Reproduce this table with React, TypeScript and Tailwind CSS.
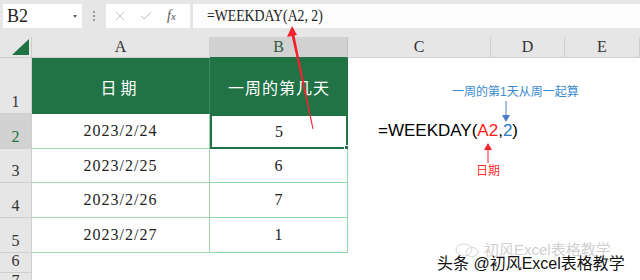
import { X, Check } from 'lucide-react'

const serif = { fontFamily: "'Liberation Serif', 'Noto Sans CJK SC', serif" }
const sans = { fontFamily: "'Liberation Sans', 'Noto Sans CJK SC', sans-serif" }

const cols = [
  { key: 'A', w: 'w-[178px]' },
  { key: 'B', w: 'w-[138px]' },
  { key: 'C', w: 'w-[143px]' },
  { key: 'D', w: 'w-[74px]' },
  { key: 'E', w: 'w-[75px]' },
]

const data = [
  { date: '2023/2/24', day: '5', h: 'h-[35px]' },
  { date: '2023/2/25', day: '6', h: 'h-[34px]' },
  { date: '2023/2/26', day: '7', h: 'h-[35px]' },
  { date: '2023/2/27', day: '1', h: 'h-[35px]' },
]

const RowHead = ({ n, h, active }: { n: string; h: string; active?: boolean }) => (
  <div
    className={`w-[32px] ${h} shrink-0 border-b border-r border-[#cfcfcf] flex items-end justify-center text-[16px] leading-none pb-[3px] ${
      active ? 'bg-[#d2d2d2] text-[#217346]' : 'bg-[#e6e6e6] text-[#333]'
    }`}
    style={serif}
  >
    {n}
  </div>
)

const FormulaBar = () => (
  <div className="h-[37px] bg-[#e6e6e6] flex items-start pt-[4px]">
    <div className="ml-[3px] w-[79px] h-[24px] bg-white flex items-center justify-between pl-[4px] pr-[5px]">
      <span className="text-[18px] leading-none text-[#222]" style={serif}>
        B2
      </span>
      <span className="w-0 h-0 border-l-[2px] border-r-[2px] border-t-[3px] border-l-transparent border-r-transparent border-t-[#666]" />
    </div>
    <div className="w-[24px] h-[24px] flex flex-col items-center justify-center gap-[2px]">
      <span className="w-[2px] h-[2px] bg-[#9a9a9a]" />
      <span className="w-[2px] h-[2px] bg-[#9a9a9a]" />
      <span className="w-[2px] h-[2px] bg-[#9a9a9a]" />
    </div>
    <div className="w-[84px] h-[24px] bg-white flex items-center pl-[7px] gap-[12px]">
      <X size={14} strokeWidth={1.2} color="#a8a8a8" />
      <Check size={14} strokeWidth={1.4} color="#a8a8a8" />
      <span className="italic text-[14px] leading-none text-[#555] ml-[2px]" style={serif}>
        f<span className="text-[11px]">x</span>
      </span>
    </div>
    <div className="ml-[3px] flex-1 h-[24px] bg-[#fdfdfd] flex items-center pl-[14px]">
      <span
        className="text-[16px] leading-none text-[#222] origin-left scale-x-[0.86] inline-block whitespace-pre"
        style={serif}
      >
        =WEEKDAY(A2, 2)
      </span>
    </div>
  </div>
)

const ColumnHeads = () => (
  <div className="flex h-[21px]">
    <div className="w-[32px] shrink-0 bg-[#e6e6e6] border-r border-b border-[#cfcfcf] flex items-end justify-end pr-[2px] pb-[2px]">
      <svg width="17" height="16" viewBox="0 0 17 16">
        <polygon points="17,0 17,16 0,16" fill="#217346" />
      </svg>
    </div>
    {cols.map((c) => (
      <div
        key={c.key}
        className={`${c.w} shrink-0 border-r border-b flex items-center justify-center text-[16px] leading-none ${
          c.key === 'B'
            ? 'bg-[#d2d2d2] text-[#2f5a43] border-[#bdbdbd] border-b-[#217346]'
            : 'bg-[#e6e6e6] text-[#333] border-[#cfcfcf]'
        }`}
        style={serif}
      >
        {c.key}
      </div>
    ))}
  </div>
)

const Annotations = () => (
  <>
    {/* big red pointer from B2 up to the argument in the formula bar */}
    <svg className="absolute left-0 top-0 pointer-events-none" width="640" height="280">
      <polygon points="313.5,129 312.5,129 291,33 294,33" fill="#f5222d" />
      <polygon points="292,26 287,37 297,35" fill="#f5222d" />
      <line x1="506" y1="101" x2="506" y2="116" stroke="#4a7cc8" strokeWidth="1" />
      <polygon points="502,115 510,115 506,122" fill="#4a7cc8" />
      <line x1="488" y1="149" x2="488" y2="163" stroke="#f5222d" strokeWidth="1" />
      <polygon points="484,150 492,150 488,143" fill="#f5222d" />
    </svg>

    <div
      className="absolute left-[452px] top-[86px] text-[12px] leading-none text-[#3b8bd0] whitespace-nowrap"
      style={sans}
    >
      一周的第1天从周一起算
    </div>

    <div className="absolute left-[378px] top-[122px] text-[17px] leading-none text-black whitespace-nowrap" style={sans}>
      =WEEKDAY(<span className="text-[#ff1a1a]">A2</span>,<span className="text-[#2a78c6]">2</span>)
    </div>

    <div className="absolute left-[476px] top-[165px] text-[12px] leading-none text-[#ff2a2a] whitespace-nowrap" style={sans}>
      日期
    </div>

    {/* faded account mark and the caption over it */}
    <div className="absolute left-[455px] top-[242px] flex items-center gap-[3px] opacity-40 text-[#888]">
      <svg width="26" height="14" viewBox="0 0 26 14">
        <ellipse cx="9" cy="7" rx="8" ry="6" fill="none" stroke="#999" strokeWidth="1" />
        <ellipse cx="17" cy="9" rx="6" ry="4.5" fill="none" stroke="#999" strokeWidth="1" />
      </svg>
      <span className="text-[15px] leading-none whitespace-nowrap" style={sans}>
        初风Excel表格教学
      </span>
    </div>
    <div
      className="absolute left-[437px] top-[256px] text-[16px] leading-none text-[#111] whitespace-nowrap [text-shadow:0_0_2px_#fff,0_0_2px_#fff,1px_1px_1px_#fff]"
      style={sans}
    >
      头条 @初风Excel表格教学
    </div>
  </>
)

export default function App() {
  return (
    <div className="w-[640px] h-[280px] overflow-hidden bg-white relative">
      <FormulaBar />
      <ColumnHeads />

      <div className="flex h-[56px]">
        <RowHead n="1" h="h-[56px]" />
        <div
          className="w-[178px] shrink-0 bg-[#217346] border-r border-[#3f8a5e] flex items-center justify-center text-white text-[16px] tracking-[4px] pt-[6px]"
          style={serif}
        >
          日期
        </div>
        <div
          className="w-[138px] shrink-0 bg-[#217346] flex items-center justify-center text-white text-[16px] tracking-[1px] pt-[6px]"
          style={serif}
        >
          一周的第几天
        </div>
      </div>

      {data.map((r, i) => (
        <div key={r.date} className={`flex ${r.h}`}>
          <RowHead n={String(i + 2)} h={r.h} active={i === 0} />
          <div
            className="w-[178px] shrink-0 border-b border-r border-[#9fd6b3] flex items-center justify-center text-[16px] text-[#222] tracking-[1px]"
            style={serif}
          >
            {r.date}
          </div>
          <div
            className={`w-[138px] shrink-0 flex items-center justify-center text-[16px] text-[#222] relative ${
              i === 0 ? 'border-2 border-[#217346]' : 'border-b border-r border-[#8fdcaa]'
            }`}
            style={serif}
          >
            {r.day}
            {i === 0 && <span className="absolute -right-[3px] -bottom-[3px] w-[5px] h-[5px] bg-[#217346] border border-white" />}
          </div>
        </div>
      ))}

      <div className="flex h-[20px]">
        <RowHead n="6" h="h-[20px]" />
      </div>
      <div className="flex h-[20px]">
        <RowHead n="7" h="h-[20px]" />
      </div>

      <Annotations />
    </div>
  )
}
